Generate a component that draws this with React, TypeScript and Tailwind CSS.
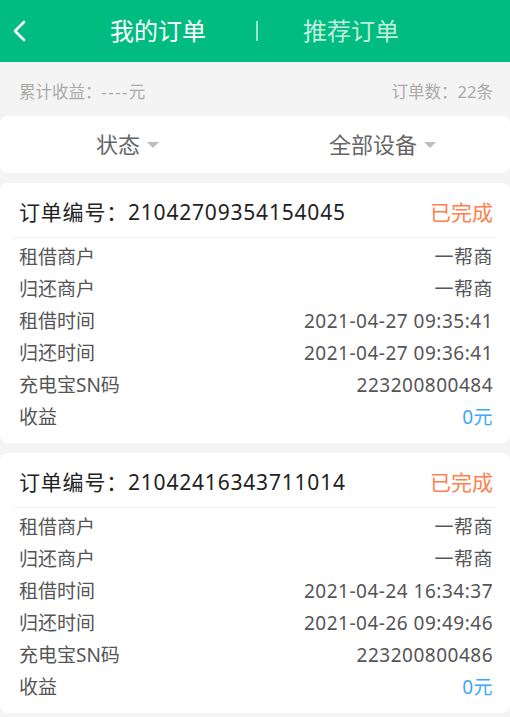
interface OrderItem {
  no: string;
  status: string;
  rentShop: string;
  returnShop: string;
  rentTime: string;
  returnTime: string;
  sn: string;
  income: string;
}

const ORDERS: OrderItem[] = [
  {
    no: "21042709354154045",
    status: "已完成",
    rentShop: "一帮商",
    returnShop: "一帮商",
    rentTime: "2021-04-27 09:35:41",
    returnTime: "2021-04-27 09:36:41",
    sn: "223200800484",
    income: "0元",
  },
  {
    no: "21042416343711014",
    status: "已完成",
    rentShop: "一帮商",
    returnShop: "一帮商",
    rentTime: "2021-04-24 16:34:37",
    returnTime: "2021-04-26 09:49:46",
    sn: "223200800486",
    income: "0元",
  },
];

const Caret = () => (
  <svg width="12" height="6" viewBox="0 0 12 6" className="ml-[7px]">
    <path d="M0 0 L12 0 L6 6 Z" fill="#bdbdbd" />
  </svg>
);

const Row = ({ label, value, blue }: { label: string; value: string; blue?: boolean }) => (
  <div className="flex items-center justify-between leading-[32px]">
    <span className="text-[#555]">{label}</span>
    <span className={blue ? "text-[#3ea6fb] tracking-[0.5px]" : "text-[#555] tracking-[0.5px]"}>{value}</span>
  </div>
);

const OrderCard = ({ o }: { o: OrderItem }) => (
  <div className="bg-white rounded-lg mb-[10px] pb-[10px]">
    {/* header */}
    <div className="mx-[13px] pl-[6px] pr-[4px] pt-[17px] pb-[12px] border-b border-[#f2f2f2] flex items-center justify-between leading-[25px] text-[21px]">
      <span className="text-[#222] tracking-[0.8px]">订单编号：{o.no}</span>
      <span className="text-[#ff7f4f]">{o.status}</span>
    </div>
    {/* rows */}
    <div className="pl-[19px] pr-[17px] pt-[3px] text-[19px]">
      <Row label="租借商户" value={o.rentShop} />
      <Row label="归还商户" value={o.returnShop} />
      <Row label="租借时间" value={o.rentTime} />
      <Row label="归还时间" value={o.returnTime} />
      <Row label="充电宝SN码" value={o.sn} />
      <Row label="收益" value={o.income} blue />
    </div>
  </div>
);

export default function App() {
  return (
    <div
      className="w-[510px] min-h-[717px] bg-[#f4f4f4]"
      style={{ fontFamily: '"Noto Sans", "Noto Sans CJK SC", sans-serif' }}
    >
      {/* Top bar */}
      <div className="h-[62px] bg-[#00bc80] flex items-center text-white">
        <div className="w-[60px] pl-[13px] flex items-center">
          <svg width="14" height="22" viewBox="0 0 14 22" fill="none">
            <polyline points="11,2 2,11 11,20" stroke="white" strokeWidth="2.6" strokeLinecap="round" strokeLinejoin="round" />
          </svg>
        </div>
        <div className="w-[196px] text-center text-[24px] leading-[30px]">我的订单</div>
        <div className="w-[2px] h-[20px] bg-white/60" />
        <div className="w-[186px] text-center text-[24px] leading-[30px] text-white/75">推荐订单</div>
      </div>

      {/* Summary */}
      <div className="pl-[19px] pr-[17px] pt-[19px] pb-[14px] flex justify-between text-[16.5px] leading-[21px] text-[#aaa]">
        <span>
          累计收益：<span className="tracking-[1.5px]">----</span>元
        </span>
        <span>订单数：22条</span>
      </div>

      {/* Filters */}
      <div className="bg-white rounded-lg h-[57px] grid grid-cols-2 mb-[10px] text-[22px] text-[#666]">
        <div className="flex items-center justify-center">
          状态
          <Caret />
        </div>
        <div className="flex items-center justify-center">
          全部设备
          <Caret />
        </div>
      </div>

      {ORDERS.map((o) => (
        <OrderCard key={o.no} o={o} />
      ))}
    </div>
  );
}
